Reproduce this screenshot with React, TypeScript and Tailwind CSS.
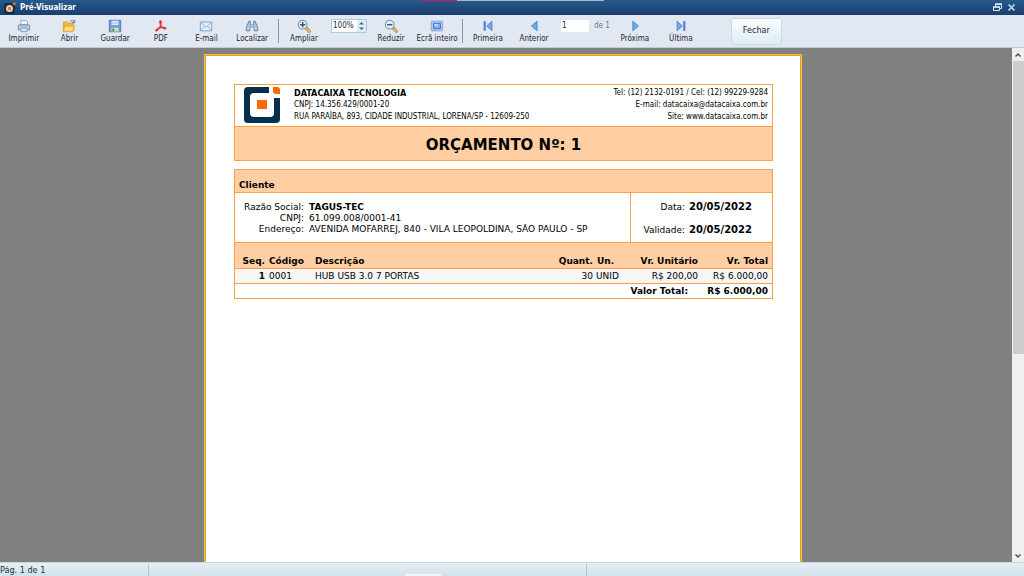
/**
 * Pré-Visualizar
 * Janela de pré-visualização de impressão de um orçamento
 */

import type { ReactNode } from 'react';

interface ToolButtonProps {
  label: string;
  icon: ReactNode;
}

function ToolButton({ label, icon }: ToolButtonProps) {
  return (
    <button type="button" className="w-full min-w-0 flex flex-col items-center gap-px whitespace-nowrap">
      <svg viewBox="0 0 16 16" className="w-[14px] h-[14px]" aria-hidden="true">
        {icon}
      </svg>
      <span className="text-[8px] leading-[10px]">{label}</span>
    </button>
  );
}

function Separator() {
  return <div className="w-px h-6 bg-[#8f979f] flex-shrink-0" />;
}

const printIcon = (
  <>
    <path d="M4.500 7V1.500h5.500l2 2V7z" fill="#f4f9ff" stroke="#7f9cc0" />
    <path d="M1.500 12.500v-4.500q0-1.500 1.500-1.500h10q1.500 0 1.500 1.500v4.500z" fill="#c9ced8" stroke="#7b8494" />
    <path d="M4 7h8v2H4z" fill="#9bb9dd" />
    <path d="M4.500 10.500h7v4h-7z" fill="#d5e8ff" stroke="#7f93b5" />
  </>
);

const openIcon = (
  <>
    <path d="M1.500 13.500v-10h5l1 1.500h6v8.500z" fill="#f3b93c" stroke="#d69a35" />
    <path d="M1.500 14.500l1.500-6.500h11l-1.500 6.500z" fill="#ffd873" stroke="#dba43a" />
    <path d="M4 11h7" stroke="#fff0bd" />
    <path d="M9 3q3-3 5 0M14.500 1v3h-3" fill="none" stroke="#4f7194" />
  </>
);

const saveIcon = (
  <>
    <path d="M1.500 1.500h13v13h-13z" fill="#6d9be0" stroke="#4a72b8" />
    <path d="M4 2h8v5H4z" fill="#dce9fb" />
    <path d="M4 4.500h8" stroke="#95b4df" />
    <path d="M3.500 9.500h9v5h-9z" fill="#cbe6b1" stroke="#8aa9a6" />
    <path d="M5 11h2v3H5z" fill="#41699c" />
  </>
);

const pdfIcon = (
  <path
    d="M7 2c1.500-.5 1.500 2.500.5 5C6 11 4 13.500 2.500 13.500c-1.500 0 .5-2.500 4.500-3.500 3.500-.8 6.500-.5 6.500.7s-3.500.3-5.300-2.700C7 6 6 2.500 7 2z"
    fill="none"
    stroke="#e3323b"
    strokeWidth="1.500"
  />
);

const mailIcon = (
  <>
    <path d="M1.500 3.500h13v10h-13z" fill="#e3efff" stroke="#7396ca" />
    <path d="M2 4l6 5.500L14 4M2 13l4.500-5M14 13L9.500 8" fill="none" stroke="#89a9d6" />
  </>
);

const findIcon = (
  <>
    <path d="M4.500 2.500H6v4h4v-4h1.500l3 7v4h-4V9h-5v4.500h-4v-4z" fill="#a5c2de" stroke="#5a7da3" />
    <path d="M8 6v3" stroke="#e1e8f1" />
    <path d="M3 10.500h2M11 10.500h2" stroke="#e2f0fb" strokeWidth="1.500" />
  </>
);

const zoomLens = (
  <>
    <path d="M10.500 10.500l3.500 3.500" stroke="#a37c38" strokeWidth="3.500" strokeLinecap="round" />
    <path d="M11 11l3 3" stroke="#e7c360" strokeWidth="1.800" strokeLinecap="round" />
    <circle cx="6.500" cy="6.500" r="5" fill="#dcecff" stroke="#8492a5" strokeWidth="1.200" />
  </>
);

const zoomInIcon = (
  <>
    {zoomLens}
    <path d="M6.500 3.500v6M3.500 6.500h6" stroke="#3b5578" strokeWidth="1.600" />
  </>
);

const zoomOutIcon = (
  <>
    {zoomLens}
    <path d="M3.500 6.500h6" stroke="#3b5578" strokeWidth="1.600" />
  </>
);

const fullscreenIcon = (
  <>
    <path d="M1.500 2.500h13v11h-13z" fill="#b5c9f3" stroke="#8b9bc9" />
    <path d="M4 5h8v6H4z" fill="#7fb0ff" stroke="#3865ce" />
    <path d="M5 6h4v2H5z" fill="#c8deff" />
  </>
);

const firstIcon = (
  <>
    <path d="M3 2.500h2.500v11H3z" fill="#4b83d4" />
    <path d="M12.500 2.500v11L6.500 8z" fill="#6fa9ee" stroke="#4a84d6" />
  </>
);

const previousIcon = <path d="M11.500 2.500v11L5 8z" fill="#6fa9ee" stroke="#4a84d6" />;

const nextIcon = <path d="M5.500 2.500v11L12 8z" fill="#6fa9ee" stroke="#4a84d6" />;

const lastIcon = (
  <>
    <path d="M3.500 2.500v11L9.500 8z" fill="#6fa9ee" stroke="#4a84d6" />
    <path d="M10.500 2.500H13v11h-2.500z" fill="#4b83d4" />
  </>
);

const fileTools: ToolButtonProps[] = [
  { label: 'Imprimir', icon: printIcon },
  { label: 'Abrir', icon: openIcon },
  { label: 'Guardar', icon: saveIcon },
  { label: 'PDF', icon: pdfIcon },
  { label: 'E-mail', icon: mailIcon },
  { label: 'Localizar', icon: findIcon },
];

const items = [
  { seq: 1, code: '0001', description: 'HUB USB 3.0 7 PORTAS', quantity: 30, unit: 'UNID', price: 'R$ 200,00', total: 'R$ 6.000,00' },
];

function TitleBar() {
  return (
    <header className="relative h-[15px] flex-shrink-0 flex items-center gap-1 pl-1 pr-2 bg-linear-to-b from-[#285a8d] to-[#193d6d] text-white">
      {/* janelas por trás, visíveis na borda superior */}
      <div className="absolute top-0 left-[41%] w-[18%] h-px bg-[#a9b6c4]">
        <div className="w-1/5 h-full bg-[#c01e68]" />
      </div>
      <svg viewBox="0 0 12 12" className="w-3 h-3" aria-hidden="true">
        <rect y="1" width="11" height="11" rx="2" fill="#12304c" />
        <circle cx="5.500" cy="6.500" r="3.500" fill="#f3cdb2" />
        <path d="M4 5h3v3H4z" fill="#ed7934" />
        <circle cx="10.300" cy="1.700" r="1.500" fill="#f26b22" />
      </svg>
      <h1 className="flex-1 text-[8px] leading-3 font-bold">Pré-Visualizar</h1>
      <button type="button" aria-label="Restaurar">
        <svg viewBox="0 0 9 9" className="w-[9px] h-[9px]">
          <path d="M2.500 3V1.500h6v4H7" fill="none" stroke="#dce8f4" />
          <path d="M.5 4h6v3.500h-6z" fill="none" stroke="#dce8f4" />
          <path d="M2 1h7M0 4h7" stroke="#dce8f4" strokeWidth="1.500" />
        </svg>
      </button>
      <button type="button" aria-label="Fechar janela" className="ml-px">
        <svg viewBox="0 0 9 9" className="w-[9px] h-[9px]">
          <path d="M1.500 1.500l6 6M7.500 1.500l-6 6" stroke="#b9d6ee" strokeWidth="1.700" />
        </svg>
      </button>
    </header>
  );
}

function Toolbar() {
  return (
    <nav className="h-[33px] flex-shrink-0 flex items-center pl-px bg-[#e1e8f1] border-b border-[#c3cad1] text-[#1d2733]">
      <div className="w-[274px] grid grid-cols-6">
        {fileTools.map((tool) => (
          <ToolButton key={tool.label} label={tool.label} icon={tool.icon} />
        ))}
      </div>
      <div className="w-[3px]" />
      <Separator />
      <div className="flex items-center px-0.5">
        <div className="w-[46px]">
          <ToolButton label="Ampliar" icon={zoomInIcon} />
        </div>
        <div className="w-[36px] h-[14px] ml-1 mb-[11px] flex items-center border border-[#a9cbe0] bg-white">
          <input
            aria-label="Zoom"
            defaultValue="100%"
            className="w-[25px] h-3 pl-px text-[8px] leading-3 outline-none"
          />
          <svg viewBox="0 0 9 12" className="w-[9px] h-3 bg-[#dcebf5]" aria-hidden="true">
            <path d="M2 4.500L4.500 2 7 4.500zM2 7.500L4.500 10 7 7.500z" fill="#3d6b94" />
          </svg>
        </div>
        <div className="w-[46px] ml-px">
          <ToolButton label="Reduzir" icon={zoomOutIcon} />
        </div>
        <div className="w-[46px]">
          <ToolButton label="Ecrã inteiro" icon={fullscreenIcon} />
        </div>
      </div>
      <Separator />
      <div className="flex items-center pl-0.5">
        <div className="w-[46px]">
          <ToolButton label="Primeira" icon={firstIcon} />
        </div>
        <div className="w-[46px]">
          <ToolButton label="Anterior" icon={previousIcon} />
        </div>
        <label className="ml-1 mb-[11px] flex items-center text-[8px] leading-3 text-[#5d7d9f]">
          <input
            aria-label="Página"
            defaultValue="1"
            className="w-7 h-3 mr-[5px] pl-px bg-white text-[#1d2733] outline-none"
          />
          de 1
        </label>
        <div className="w-[46px] ml-0.5">
          <ToolButton label="Próxima" icon={nextIcon} />
        </div>
        <div className="w-[46px]">
          <ToolButton label="Última" icon={lastIcon} />
        </div>
      </div>
      <button
        type="button"
        className="ml-[27px] w-[51px] h-[27px] rounded-xs border border-[#c5dde8] bg-linear-to-b from-[#fafcfd] to-[#dfedf4] text-[9px]"
      >
        Fechar
      </button>
    </nav>
  );
}

function ReportHeader() {
  return (
    <section className="border border-[#fca044]">
      <div className="h-[41px] flex gap-[14px] pl-[9px] pr-1 pt-0.5 font-['DejaVu_Sans_Condensed','DejaVu_Sans',sans-serif]">
        <svg viewBox="0 0 36 36" className="w-9 h-9 flex-shrink-0" role="img" aria-label="Datacaixa">
          <path
            d="M25 0H4Q0 0 0 4v28q0 4 4 4h28q4 0 4-4V11h-6v15q0 4-4 4H10q-4 0-4-4V10q0-4 4-4h15z"
            fill="#07304f"
          />
          <path d="M13 13h10v9H13z" fill="#ff6700" />
          <path d="M29 0h4q3 0 3 3v4h-4q-3 0-3-3z" fill="#ff6700" />
        </svg>
        <div className="flex-1 text-[8px] leading-3">
          <h2 className="text-[9px] leading-3 font-bold">DATACAIXA TECNOLOGIA</h2>
          <p>CNPJ: 14.356.429/0001-20</p>
          <p>RUA PARAÍBA, 893, CIDADE INDUSTRIAL, LORENA/SP - 12609-250</p>
        </div>
        <div className="text-[8px] leading-3 text-right whitespace-nowrap">
          <p>Tel: (12) 2132-0191 / Cel: (12) 99229-9284</p>
          <p>E-mail: datacaixa@datacaixa.com.br</p>
          <p>Site: www.datacaixa.com.br</p>
        </div>
      </div>
      <h3 className="h-[34px] pt-1 text-center border-t border-[#fca044] bg-[#ffcfa3] text-[15px] leading-7 font-bold">
        ORÇAMENTO Nº: 1
      </h3>
    </section>
  );
}

function ClientInfo() {
  return (
    <>
      <h3 className="h-[22px] pl-1 pt-[9px] bg-[#ffcfa3] text-[9px] leading-3 font-bold">Cliente</h3>
      <div className="h-[51px] flex border-y border-[#fca044]">
        <dl className="flex-1 grid grid-cols-[69px_1fr] content-start gap-x-[5px] pt-[9px] text-[9px] leading-[11px]">
          <dt className="text-right">Razão Social:</dt>
          <dd className="font-bold">TAGUS-TEC</dd>
          <dt className="text-right">CNPJ:</dt>
          <dd>61.099.008/0001-41</dd>
          <dt className="text-right">Endereço:</dt>
          <dd>AVENIDA MOFARREJ, 840 - VILA LEOPOLDINA, SÃO PAULO - SP</dd>
        </dl>
        <dl className="w-[142px] grid grid-cols-[54px_1fr] content-start gap-x-1 gap-y-[11px] pt-2 border-l border-[#fca044] text-[9px] leading-3">
          <dt className="text-right">Data:</dt>
          <dd className="text-[10px] leading-3 font-bold">20/05/2022</dd>
          <dt className="text-right">Validade:</dt>
          <dd className="text-[10px] leading-3 font-bold">20/05/2022</dd>
        </dl>
      </div>
    </>
  );
}

function ItemsTable() {
  return (
    <table className="w-full table-fixed text-[9px] leading-3 text-right whitespace-nowrap">
      <colgroup>
        <col className="w-[30px]" />
        <col className="w-[49px]" />
        <col />
        <col className="w-[50px]" />
        <col className="w-[34px]" />
        <col className="w-[71px]" />
        <col className="w-[74px]" />
      </colgroup>
      <thead>
        <tr className="h-[25px] bg-[#ffcfa3] align-bottom">
          <th className="pb-px">Seq.</th>
          <th className="pl-1 pb-px text-left">Código</th>
          <th className="pl-px pb-px text-left">Descrição</th>
          <th className="pb-px">Quant.</th>
          <th className="pl-1 pb-px text-left">Un.</th>
          <th className="pb-px">Vr. Unitário</th>
          <th className="pr-1 pb-px">Vr. Total</th>
        </tr>
      </thead>
      <tbody>
        {items.map((item) => (
          <tr key={item.seq} className="h-[15px] border-y border-[#fca044] bg-[#f6f6f6]">
            <td className="font-bold">{item.seq}</td>
            <td className="pl-1 text-left">{item.code}</td>
            <td className="pl-px text-left">{item.description}</td>
            <td>{item.quantity}</td>
            <td className="pl-[3px] text-left">{item.unit}</td>
            <td>{item.price}</td>
            <td className="pr-1">{item.total}</td>
          </tr>
        ))}
      </tbody>
      <tfoot>
        <tr className="h-[15px] font-bold">
          <td colSpan={6} className="pr-[10px]">Valor Total:</td>
          <td className="pr-1">R$ 6.000,00</td>
        </tr>
      </tfoot>
    </table>
  );
}

function ScrollBar() {
  return (
    <div className="w-3 flex-shrink-0 flex flex-col bg-[#f0f0f0]">
      <button type="button" aria-label="Rolar para cima" className="h-[13px] flex items-center justify-center">
        <svg viewBox="0 0 8 8" className="w-2 h-2">
          <path d="M1.500 5.500L4 3l2.500 2.500" fill="none" stroke="#505050" strokeWidth="1.500" />
        </svg>
      </button>
      <div className="flex-1 pl-px">
        <div className="h-3/5 bg-[#cdcdcd]" />
      </div>
      <button type="button" aria-label="Rolar para baixo" className="h-[13px] flex items-center justify-center">
        <svg viewBox="0 0 8 8" className="w-2 h-2">
          <path d="M1.500 2.500L4 5l2.500-2.500" fill="none" stroke="#505050" strokeWidth="1.500" />
        </svg>
      </button>
    </div>
  );
}

export default function App() {
  return (
    <div className="h-screen flex flex-col overflow-hidden bg-[#808080] font-['DejaVu_Sans_Condensed','DejaVu_Sans',sans-serif]">
      <TitleBar />
      <Toolbar />

      {/* Área da página */}
      <div className="flex-1 min-h-0 flex">
        <main className="flex-1 min-w-0 flex justify-center overflow-hidden pt-[6px] pr-[6px]">
          <article className="w-full max-w-[598px] h-[845px] pl-7 pr-[27px] pt-7 border-2 border-[#d9a233] outline-1 -outline-offset-1 outline-[#ffc130] bg-white text-black font-['DejaVu_Sans',sans-serif]">
            <ReportHeader />
            <section className="mt-2 border border-[#fca044]">
              <ClientInfo />
              <ItemsTable />
            </section>
          </article>
        </main>
        <ScrollBar />
      </div>

      {/* Barra de estado */}
      <footer className="h-[14px] flex-shrink-0 flex items-end border-t border-[#c8d8df] bg-linear-to-b from-[#e5eff4] to-[#d2e2eb] text-[9px] leading-3 text-[#26323b]">
        <span className="w-[149px] border-r border-[#a9c6d6]">Pág. 1 de 1</span>
        <span className="w-[438px] h-3 flex justify-center items-end pl-[110px] border-r border-[#a9c6d6]">
          <span className="w-9 h-0.5 bg-[#f2f6fa]" />
        </span>
      </footer>
    </div>
  );
}
